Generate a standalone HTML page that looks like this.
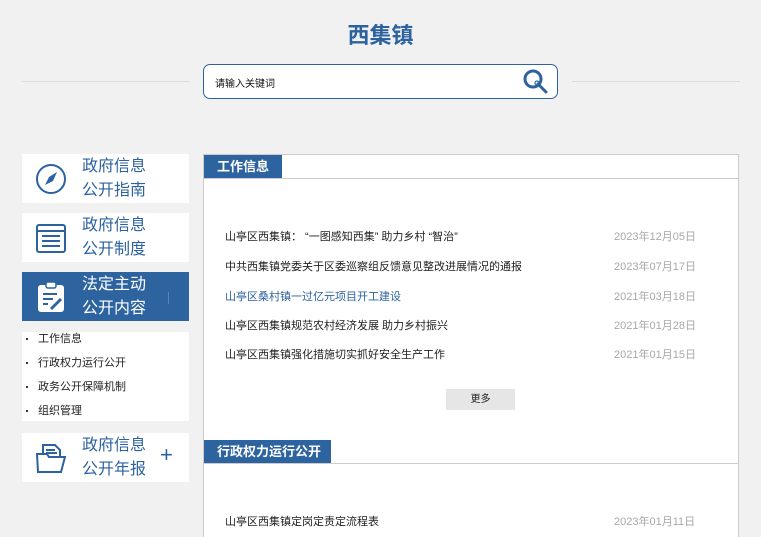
<!DOCTYPE html>
<html style="width:761px;height:537px;overflow:hidden"><head><meta charset="utf-8"><style>
*{margin:0;padding:0;box-sizing:border-box}
body{width:761px;height:537px;overflow:hidden;background:#f1f1f2;font-family:"Liberation Sans","Noto Sans CJK SC",sans-serif;position:relative}
.a{position:absolute}
.title{left:0;width:761px;top:18px;text-align:center;font-size:22px;font-weight:bold;color:#2d62a0}
.hl{top:81px;height:1px;background:#dcdcdc}
.search{left:203px;top:64px;width:355px;height:35px;border:1.5px solid #2d62a0;border-radius:7px;background:#fff}
.search span{position:absolute;left:11px;top:10px;font-size:10px;color:#111}
.nav{left:22px;width:167px;height:49px;background:#fff}
.nav .t{position:absolute;left:60px;top:1px;font-size:16px;line-height:24px;color:#2d62a0}
.nav.on{background:#2d64a0}
.nav.on .t{color:#fff}
.nav svg{position:absolute;left:13px;top:9px}
.sub{left:22px;top:332px;width:167px;height:89px;background:#fff;font-size:11px;color:#222}
.sub div{position:relative;padding-left:16px;height:24px;line-height:14px}
.sub div:before{content:"";position:absolute;left:4px;top:6px;width:2px;height:2px;background:#333}
.panel{left:203px;top:154px;width:536px;height:383px;background:#fff;border:1px solid #ccc;border-bottom:none;overflow:hidden}
.tab{left:0;height:23px;background:#2d64a0;color:#fff;font-size:13px;font-weight:bold;line-height:23px;padding-left:13px}
.tl{left:0;width:534px;height:1px;background:#ccc}
.it{left:21px;font-size:11px;color:#222;white-space:nowrap}
.dt{left:410px;font-size:11px;color:#a8a8a8}
.more{left:242px;top:234px;width:69px;height:21px;background:#e6e6e6;font-size:10px;line-height:21px;text-align:center;color:#222}
</style></head><body>
<div class="a title">西集镇</div>
<div class="a hl" style="left:22px;width:168px"></div>
<div class="a hl" style="left:572px;width:168px"></div>
<div class="a search"><span>请输入关键词</span>
<svg class="a" style="left:318px;top:3px" width="28" height="28" viewBox="0 0 28 28"><circle cx="11" cy="11" r="8" fill="none" stroke="#2d62a0" stroke-width="3"/><circle cx="15" cy="15" r="2" fill="none" stroke="#2d62a0" stroke-width="1.2"/><path d="M16 16 L24 24" stroke="#2d62a0" stroke-width="3" stroke-linecap="round"/></svg></div>

<div class="a nav" style="top:154px"><svg width="32" height="32" viewBox="0 0 32 32"><circle cx="16" cy="16" r="14" fill="none" stroke="#2d62a0" stroke-width="2"/><path d="M22 9 L18 18 L10 22 L14 14 Z" fill="#2d62a0"/></svg><div class="t">政府信息<br>公开指南</div></div>
<div class="a nav" style="top:213px"><svg width="32" height="32" viewBox="0 0 32 32"><rect x="2" y="3" width="28" height="27" rx="2" fill="none" stroke="#2d62a0" stroke-width="2"/><path d="M2 9H30M7 14H25M7 19H25M7 24H25" stroke="#2d62a0" stroke-width="2"/></svg><div class="t">政府信息<br>公开制度</div></div>
<div class="a nav on" style="top:272px"><svg width="32" height="32" viewBox="0 0 32 32"><rect x="3" y="4" width="26" height="27" rx="3" fill="#fff"/><rect x="11" y="1" width="10" height="6" rx="2" fill="#fff" stroke="#2d64a0" stroke-width="1.5"/><path d="M8 13H22M8 18H18M8 23H13" stroke="#2d64a0" stroke-width="2"/><path d="M15 27L25 17L27 19L17 29Z" fill="#2d64a0"/></svg><div class="t">法定主动<br>公开内容</div><div class="a" style="left:146px;top:20px;width:1px;height:12px;background:#5a84b8"></div></div>
<div class="a sub"><div>工作信息</div><div>行政权力运行公开</div><div>政务公开保障机制</div><div>组织管理</div></div>
<div class="a nav" style="top:433px"><svg width="32" height="32" viewBox="0 0 32 32"><path d="M8 12V3H20L25 8V14" fill="none" stroke="#2d62a0" stroke-width="2"/><path d="M11 8H20M11 11H22" stroke="#2d62a0" stroke-width="2"/><path d="M2 12H12L14 15H30L26 30H3Z" fill="none" stroke="#2d62a0" stroke-width="2"/></svg><div class="t">政府信息<br>公开年报</div><div class="a" style="left:138px;top:9px;font-size:22px;color:#2d62a0">+</div></div>

<div class="a panel">
<div class="a tab" style="top:0;width:78px">工作信息</div>
<div class="a tl" style="top:23px"></div>
<div class="a it" style="top:73px">山亭区西集镇：&nbsp;“一图感知西集”&nbsp;助力乡村&nbsp;“智治”</div><div class="a dt" style="top:73px">2023年12月05日</div>
<div class="a it" style="top:103px">中共西集镇党委关于区委巡察组反馈意见整改进展情况的通报</div><div class="a dt" style="top:103px">2023年07月17日</div>
<div class="a it" style="top:133px;color:#2d62a0">山亭区桑村镇一过亿元项目开工建设</div><div class="a dt" style="top:133px">2021年03月18日</div>
<div class="a it" style="top:162px">山亭区西集镇规范农村经济发展 助力乡村振兴</div><div class="a dt" style="top:162px">2021年01月28日</div>
<div class="a it" style="top:191px">山亭区西集镇强化措施切实抓好安全生产工作</div><div class="a dt" style="top:191px">2021年01月15日</div>
<div class="a more">更多</div>
<div class="a tab" style="top:285px;width:127px">行政权力运行公开</div>
<div class="a tl" style="top:308px"></div>
<div class="a it" style="top:358px">山亭区西集镇定岗定责定流程表</div><div class="a dt" style="top:358px">2023年01月11日</div>
</div>
</body></html>
